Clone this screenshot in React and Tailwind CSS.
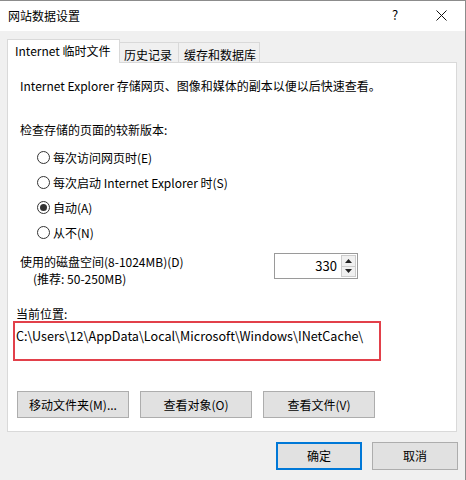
export default function App() {
  const font = "font-['Noto_Sans_CJK_SC','Noto_Sans',sans-serif]";
  const Radio = ({ checked, label }) => (
    <div className="h-[25px] flex items-center pl-[17px]">
      <span className="w-[13px] h-[13px] rounded-full border border-[#333333] bg-white flex items-center justify-center shrink-0">
        {checked && <span className="w-[7px] h-[7px] rounded-full bg-[#333333]" />}
      </span>
      <span className="ml-[3px] leading-[16px]">{label}</span>
    </div>
  );
  const Btn = ({ children, w = "w-[112px]" }) => (
    <div className={`${w} h-[27px] bg-[#e1e1e1] border border-[#adadad] flex items-center justify-center leading-[16px]`}>
      {children}
    </div>
  );
  return (
    <div className={`${font} w-[466px] h-[480px] bg-[#f0f0f0] border-t border-r border-[#8c8c8c] text-[12px] text-black overflow-hidden`}>
      {/* title bar */}
      <div className="h-[30px] bg-white flex items-center pl-[8px] relative">
        <span className="leading-[16px]">网站数据设置</span>
        <span className="absolute left-[392px] top-[6px] text-[13px] leading-[16px]">?</span>
        <svg className="absolute left-[436px] top-[9px]" width="11" height="11" viewBox="0 0 11 11">
          <path d="M0.5 0.5 L10.5 10.5 M10.5 0.5 L0.5 10.5" stroke="#111" strokeWidth="1" fill="none" />
        </svg>
      </div>
      {/* tabs */}
      <div className="h-[31px] flex items-end pl-[7px]">
        <div className="relative z-10 -mb-px h-[24px] w-[113px] bg-white border-l border-t border-r border-[#d9d9d9] pl-[7px] pt-[3px] leading-[16px]">
          Internet 临时文件
        </div>
        <div className="h-[20px] w-[59px] border-t border-r border-[#d9d9d9] pl-[4px] pt-[4px] leading-[16px]">
          历史记录
        </div>
        <div className="h-[20px] w-[81px] border-t border-r border-[#d9d9d9] pl-[5px] pt-[4px] leading-[16px]">
          缓存和数据库
        </div>
      </div>
      {/* panel */}
      <div className="ml-[7px] w-[450px] h-[370px] bg-white border border-[#d9d9d9]">
        <div className="pl-[12px]">
          <div className="pt-[15px] leading-[16px]">Internet Explorer 存储网页、图像和媒体的副本以便以后快速查看。</div>
          <div className="mt-[28px] leading-[16px]">检查存储的页面的较新版本:</div>
          <div className="mt-[7px]">
            <Radio label="每次访问网页时(E)" />
            <Radio label="每次启动 Internet Explorer 时(S)" />
            <Radio checked label="自动(A)" />
            <Radio label="从不(N)" />
          </div>
          <div className="mt-[8px] flex items-start">
            <div className="w-[254px] pt-[1px] leading-[16px]">
              <div>使用的磁盘空间(8-1024MB)(D)</div>
              <div className="pl-[13px] mt-px">(推荐: 50-250MB)</div>
            </div>
            <div className="w-[84px] h-[26px] border border-[#9a9a9a] flex bg-white">
              <div className="flex-1 flex items-center justify-end pr-[4px] text-[13px] leading-[16px]">330</div>
              <div className="w-[15px] flex flex-col my-px mr-px">
                <div className="flex-1 border border-[#cccccc] bg-[#f0f0f0] flex items-center justify-center">
                  <svg width="7" height="4" viewBox="0 0 7 4"><path d="M0 4 L3.5 0 L7 4 Z" fill="#222" /></svg>
                </div>
                <div className="flex-1 border border-t-0 border-[#cccccc] bg-[#f0f0f0] flex items-center justify-center">
                  <svg width="7" height="4" viewBox="0 0 7 4"><path d="M0 0 L3.5 4 L7 0 Z" fill="#222" /></svg>
                </div>
              </div>
            </div>
          </div>
        </div>
        <div className="pl-[8px] mt-[19px] leading-[15px]">当前位置:</div>
        <div className="ml-[5px] w-[368px] h-[40px] border-2 border-[#e2404a] pl-[1px] pt-[5px] text-[12.6px] leading-[16px]">
          C:\Users\12\AppData\Local\Microsoft\Windows\INetCache\
        </div>
        <div className="mt-[30px] pl-[9px] flex gap-[11px]">
          <Btn>移动文件夹(M)...</Btn>
          <Btn>查看对象(O)</Btn>
          <Btn>查看文件(V)</Btn>
        </div>
      </div>
      {/* bottom buttons */}
      <div className="mt-[10px] flex justify-end pr-[7px] gap-[10px]">
        <div className="w-[86px] h-[28px] bg-[#e1e1e1] border-2 border-[#0078d7] flex items-center justify-center leading-[16px]">确定</div>
        <div className="w-[86px] h-[28px] bg-[#e1e1e1] border border-[#adadad] flex items-center justify-center leading-[16px]">取消</div>
      </div>
    </div>
  );
}
